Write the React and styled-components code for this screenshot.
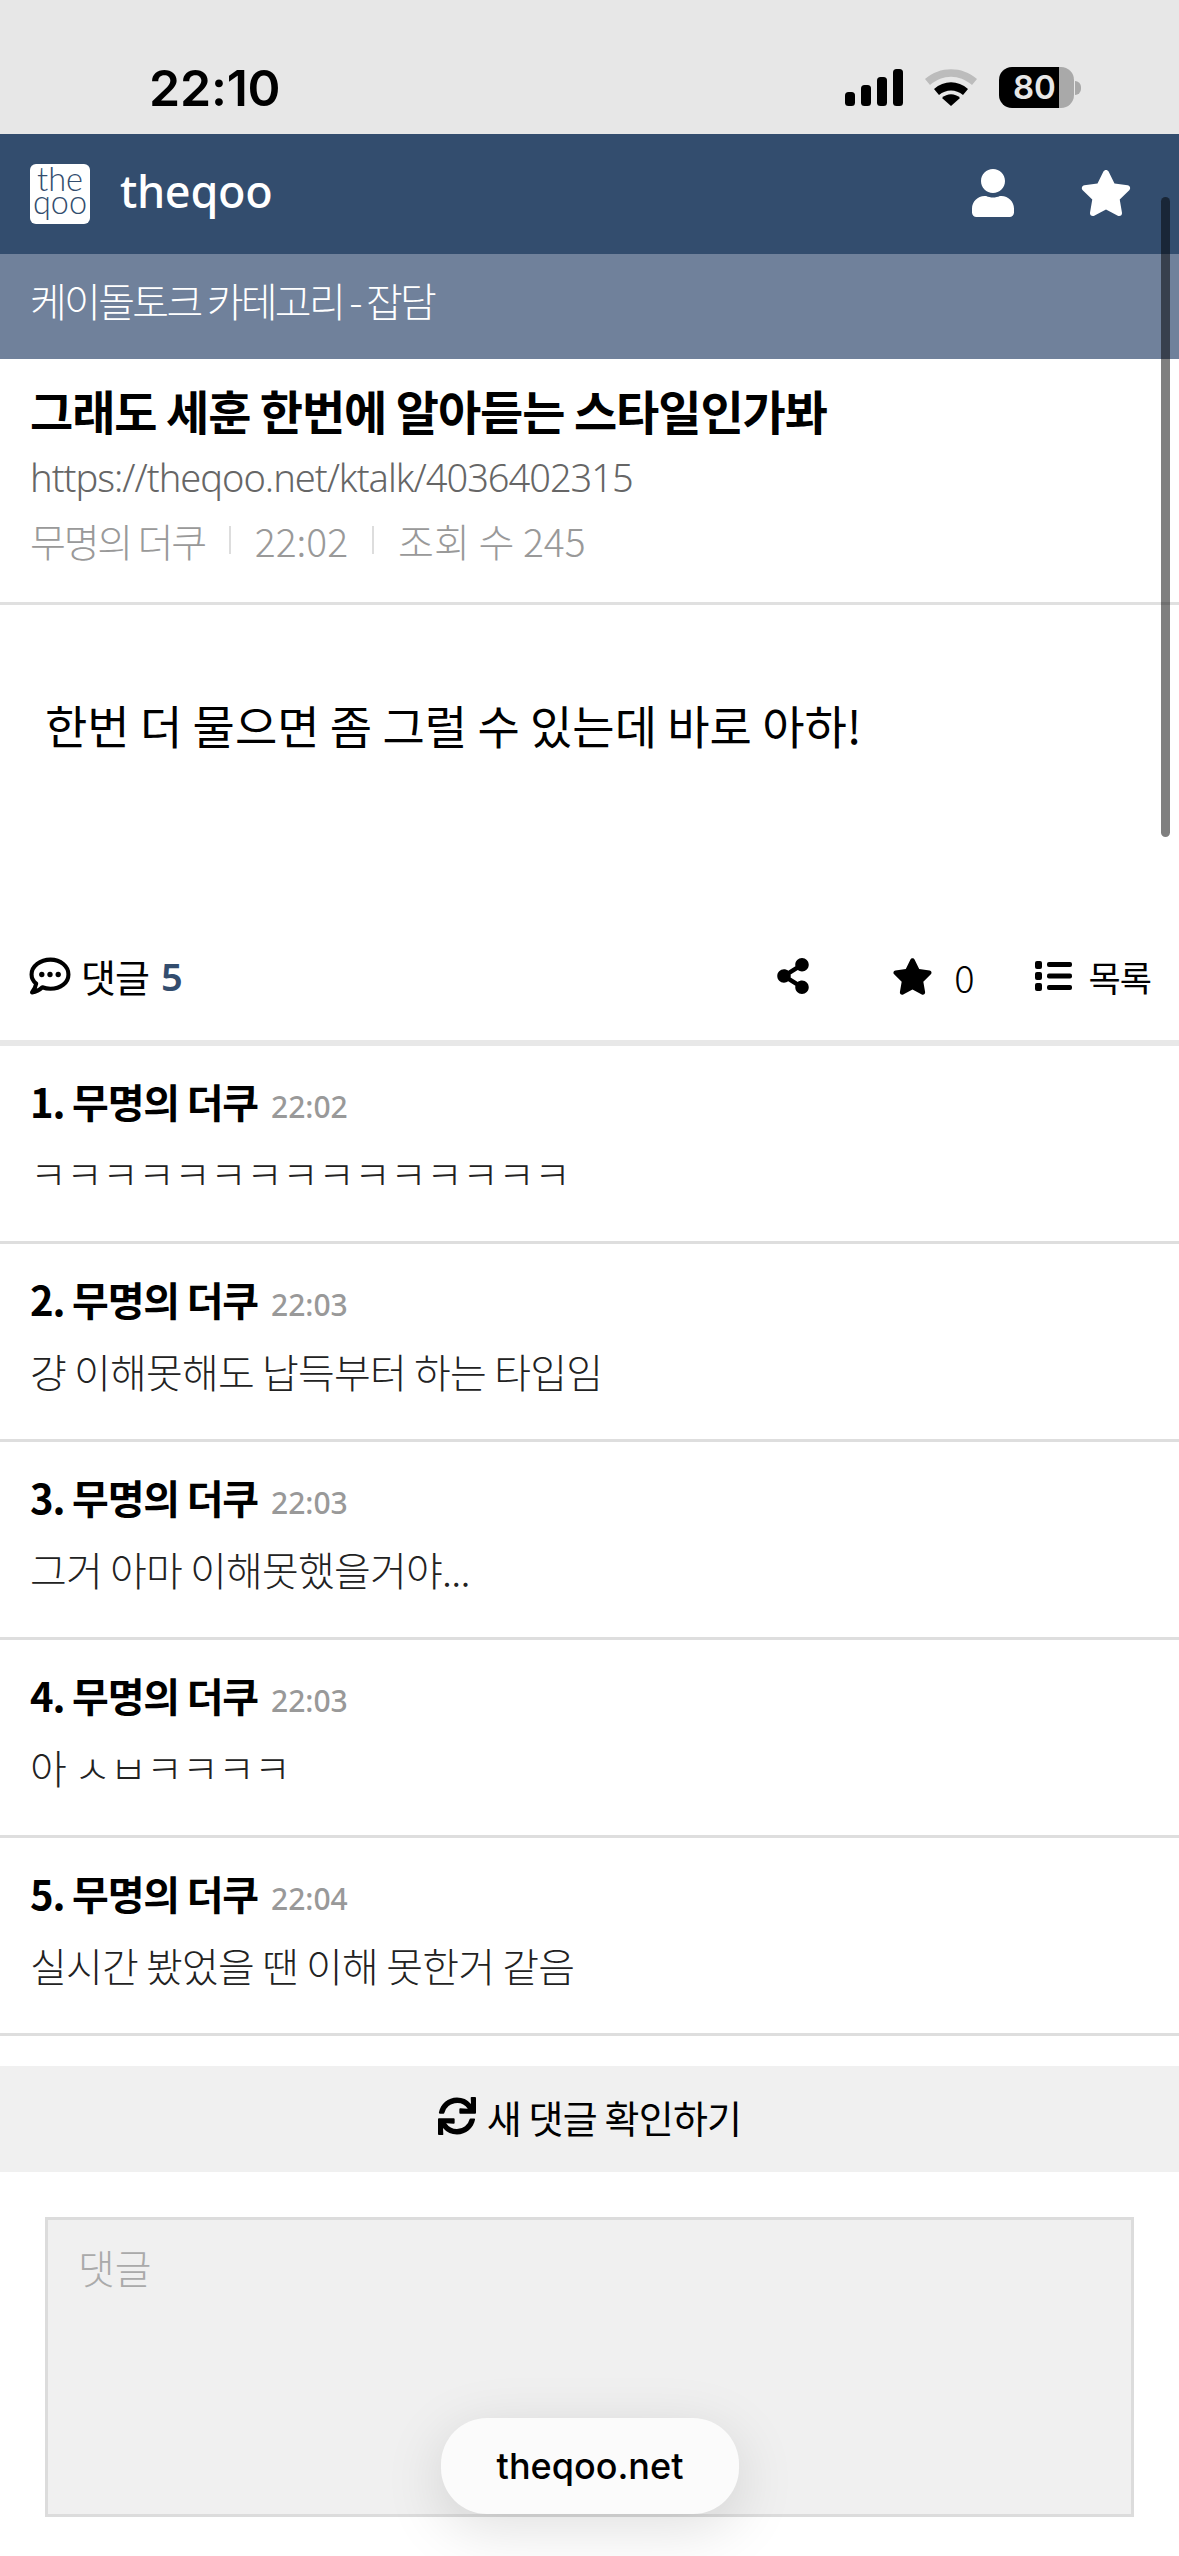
import styled, {createGlobalStyle} from 'styled-components';
import {FaUser, FaStar, FaShareAlt, FaSync} from 'react-icons/fa';

const comments = [
  {no: 1, time: '22:02', text: 'ㅋㅋㅋㅋㅋㅋㅋㅋㅋㅋㅋㅋㅋㅋㅋ'},
  {no: 2, time: '22:03', text: '걍 이해못해도 납득부터 하는 타입임'},
  {no: 3, time: '22:03', text: '그거 아마 이해못했을거야...'},
  {no: 4, time: '22:03', text: '아 ㅅㅂㅋㅋㅋㅋ'},
  {no: 5, time: '22:04', text: '실시간 봤었을 땐 이해 못한거 같음'},
];

function App() {
  return (
    <Page>
      <GlobalStyle />
      <StatusBar>
        <Clock>22:10</Clock>
        <StatusIcons>
          <svg width="58" height="37" viewBox="0 0 58 37">
            <rect x="0" y="23" width="10" height="14" rx="3.5" />
            <rect x="16" y="16" width="10" height="21" rx="3.5" />
            <rect x="32" y="8" width="10" height="29" rx="3.5" />
            <rect x="48" y="0" width="10" height="37" rx="3.5" />
          </svg>
          <svg width="52" height="37" viewBox="0 0 52 37">
            <path d="M0 10 C15 -3 37 -3 52 10 L47 16 C34 5 18 5 5 16 Z" fill="#bcbcbc" />
            <path d="M9 20 C19 11 33 11 43 20 L38 26 C31 20 21 20 14 26 Z" />
            <path d="M17 29 C22 24 30 24 35 29 L26 37 Z" />
          </svg>
          <Battery>
            <BatteryLevel>80</BatteryLevel>
            <BatteryCap />
          </Battery>
        </StatusIcons>
      </StatusBar>

      <Header>
        <Brand>
          <svg width="60" height="60" viewBox="0 0 60 60">
            <rect width="60" height="60" rx="6" fill="#fff" />
            <text fontFamily="Lato" fontWeight="300" fontSize="34" fill="#334d6e">
              <tspan x="7" y="27" textLength="46" lengthAdjust="spacingAndGlyphs">the</tspan>
              <tspan x="3" y="50" textLength="54" lengthAdjust="spacingAndGlyphs">qoo</tspan>
            </text>
          </svg>
          <BrandName>theqoo</BrandName>
        </Brand>
        <HeaderIcons>
          <FaUser size={48} />
          <FaStar size={52} />
        </HeaderIcons>
      </Header>
      <Category>케이돌토크 카테고리 - 잡담</Category>

      <PostHead>
        <Title>그래도 세훈 한번에 알아듣는 스타일인가봐</Title>
        <Url>https://theqoo.net/ktalk/4036402315</Url>
        <Meta>
          <MetaName>무명의 더쿠</MetaName>
          <MetaSep />
          <span>22:02</span>
          <MetaSep />
          <span>조회 수 245</span>
        </Meta>
      </PostHead>

      <PostBody>한번 더 물으면 좀 그럴 수 있는데 바로 아하!</PostBody>

      <Actions>
        <CommentCount>
          <svg width="42" height="38" viewBox="0 0 41 37">
            <path d="M21 2.5 C31 2.5 38.5 9 38.5 17 C38.5 25 31 31 21 31 C18 31 15.5 30.5 13 29.5 C10 32.5 6.5 34 3 34.5 C5 32 6.5 29 7 26 C4 23.5 2.5 20.5 2.5 17 C2.5 9 11 2.5 21 2.5 Z" fill="none" stroke="#000" strokeWidth="4" strokeLinejoin="round" />
            <circle cx="12.5" cy="17" r="2.6" />
            <circle cx="20.5" cy="17" r="2.6" />
            <circle cx="28.5" cy="17" r="2.6" />
          </svg>
          <span>댓글</span>
          <strong>5</strong>
        </CommentCount>
        <ActionGroup>
          <ShareIcon size={36} />
          <StarAction><FaStar size={41} /><span>0</span></StarAction>
          <ListAction>
            <svg width="37" height="30" viewBox="0 0 37 30">
              <rect x="0" y="0" width="7" height="8" rx="2" />
              <rect x="0" y="11" width="7" height="8" rx="2" />
              <rect x="0" y="22" width="7" height="8" rx="2" />
              <rect x="12" y="1" width="25" height="5" rx="2" />
              <rect x="12" y="12.5" width="25" height="5" rx="2" />
              <rect x="12" y="24" width="25" height="5" rx="2" />
            </svg>
            <span>목록</span>
          </ListAction>
        </ActionGroup>
      </Actions>

      <CommentList>
        {comments.map(c => (
          <Comment key={c.no}>
            <CommentHead>
              <CommentName>{c.no}. 무명의 더쿠</CommentName>
              <CommentTime>{c.time}</CommentTime>
            </CommentHead>
            <CommentText>{c.text}</CommentText>
          </Comment>
        ))}
      </CommentList>

      <Refresh>
        <FaSync size={38} />
        <span>새 댓글 확인하기</span>
      </Refresh>

      <FormWrap>
        <CommentBox>댓글</CommentBox>
      </FormWrap>

      <Toast>theqoo.net</Toast>
      <Scrollbar />
    </Page>
  );
}

const GlobalStyle = createGlobalStyle`
  html, body {
    margin: 0;
    padding: 0;
    background: #fff;
  }
  * {
    box-sizing: border-box;
  }
`;

const Page = styled.div`
  position: relative;
  width: 1179px;
  height: 2556px;
  overflow: hidden;
  background: #fff;
  color: #000;
  font-family: "Noto Sans CJK KR", "Noto Sans", sans-serif;
`;

const StatusBar = styled.div`
  height: 134px;
  background: #e7e7e7;
  display: flex;
  align-items: flex-start;
  justify-content: space-between;
  padding: 60px 98px 0 149px;
`;

const Clock = styled.div`
  font-family: Inter, sans-serif;
  font-weight: 600;
  font-size: 50px;
  line-height: 56px;
  letter-spacing: -0.2px;
`;

const StatusIcons = styled.div`
  display: flex;
  align-items: center;
  gap: 22px;
  margin-top: 7px;
`;

const Battery = styled.div`
  display: flex;
  align-items: center;
`;

const BatteryLevel = styled.div`
  width: 75px;
  height: 41px;
  border-radius: 13px;
  background: linear-gradient(90deg, #000 0, #000 60px, #a9a9a9 60px);
  color: #e7e7e7;
  font-family: Inter, sans-serif;
  font-weight: 600;
  font-size: 33px;
  line-height: 41px;
  padding-left: 14px;
`;

const BatteryCap = styled.div`
  width: 6px;
  height: 14px;
  margin-left: 1px;
  background: #a9a9a9;
  border-radius: 0 7px 7px 0;
`;

const Header = styled.div`
  height: 120px;
  background: #334d6e;
  color: #fff;
  display: flex;
  align-items: center;
  justify-content: space-between;
  padding: 0 47px 0 30px;
`;

const Brand = styled.div`
  display: flex;
  align-items: center;
  gap: 30px;
`;

const BrandName = styled.div`
  font-family: "Noto Sans", sans-serif;
  font-weight: 500;
  font-size: 45px;
  line-height: 60px;
  letter-spacing: -0.3px;
  margin-top: -6px;
`;

const HeaderIcons = styled.div`
  display: flex;
  align-items: center;
  gap: 63px;
  margin-top: -3px;
`;

const Category = styled.div`
  height: 105px;
  background: #70819b;
  color: #fff;
  padding-left: 30px;
  font-size: 40px;
  font-weight: 300;
  line-height: 92px;
  letter-spacing: -2.7px;
`;

const PostHead = styled.div`
  height: 246px;
  padding: 20px 30px 0;
  border-bottom: 3px solid #e0e0e0;
`;

const Title = styled.div`
  font-size: 47px;
  font-weight: 700;
  line-height: 62px;
  letter-spacing: -1.1px;
`;

const Url = styled.div`
  margin-top: 10px;
  font-family: "Noto Sans", sans-serif;
  font-size: 38px;
  font-weight: 300;
  line-height: 52px;
  color: #666;
  letter-spacing: -1px;
`;

const Meta = styled.div`
  margin-top: 11px;
  display: flex;
  align-items: center;
  gap: 24px;
  font-size: 39px;
  line-height: 52px;
  font-weight: 300;
  color: #999;
`;

const MetaName = styled.span`
  letter-spacing: -2.2px;
`;

const MetaSep = styled.i`
  width: 2px;
  height: 28px;
  background: #ddd;
`;

const PostBody = styled.div`
  height: 317px;
  padding: 87px 45px 0;
  font-size: 46px;
  line-height: 64px;
`;

const Actions = styled.div`
  height: 124px;
  padding: 0 28px 10px 29px;
  display: flex;
  align-items: center;
  justify-content: space-between;
  border-bottom: 6px solid #e8e8e8;
`;

const CommentCount = styled.div`
  display: flex;
  align-items: center;
  gap: 10px;
  font-size: 38px;
  line-height: 50px;
  letter-spacing: -1px;

  strong {
    color: #334d6e;
    font-family: "Noto Sans", sans-serif;
    font-weight: 600;
    margin-left: 2px;
  }
`;

const ActionGroup = styled.div`
  display: flex;
  align-items: center;
`;

const ShareIcon = styled(FaShareAlt)`
  margin-right: 81px;
`;

const StarAction = styled.div`
  display: flex;
  align-items: center;
  gap: 21px;
  margin-right: 60px;
  font-size: 38px;
  font-weight: 300;
`;

const ListAction = styled.div`
  display: flex;
  align-items: center;
  gap: 17px;
  font-size: 35px;
  letter-spacing: -1px;
`;

const CommentList = styled.div`
  display: flex;
  flex-direction: column;
`;

const Comment = styled.div`
  height: 198px;
  padding: 27px 30px 0;
  border-bottom: 3px solid #dedede;
`;

const CommentHead = styled.div`
  display: flex;
  align-items: baseline;
  gap: 13px;
`;

const CommentName = styled.div`
  font-size: 40px;
  font-weight: 700;
  line-height: 56px;
  letter-spacing: -1.2px;
`;

const CommentTime = styled.div`
  font-family: "Noto Sans", sans-serif;
  font-size: 30px;
  font-weight: 500;
  color: #999;
`;

const CommentText = styled.div`
  margin-top: 16px;
  font-size: 40px;
  font-weight: 300;
  line-height: 56px;
  letter-spacing: -0.8px;
  color: #222;
`;

const Refresh = styled.div`
  height: 106px;
  margin-top: 30px;
  padding-bottom: 6px;
  background: #f0f0f0;
  display: flex;
  align-items: center;
  justify-content: center;
  gap: 11px;
  font-size: 38px;
  letter-spacing: -0.8px;
`;

const FormWrap = styled.div`
  padding: 45px 45px 0 45px;
`;

const CommentBox = styled.div`
  height: 300px;
  background: #f0f0f0;
  border: 3px solid #dcdcdc;
  padding: 19px 30px;
  font-size: 40px;
  font-weight: 300;
  line-height: 56px;
  color: #aaa;
`;

const Toast = styled.div`
  position: absolute;
  left: 441px;
  top: 2418px;
  width: 298px;
  height: 96px;
  border-radius: 46px;
  background: #fbfbfb;
  box-shadow: 0 14px 60px rgba(0, 0, 0, 0.13);
  display: flex;
  align-items: center;
  justify-content: center;
  font-family: Inter, sans-serif;
  font-weight: 500;
  font-size: 36px;
`;

const Scrollbar = styled.div`
  position: absolute;
  top: 197px;
  left: 1161px;
  width: 9px;
  height: 640px;
  border-radius: 5px;
  background: rgba(0, 0, 0, 0.5);
`;

export default App;
